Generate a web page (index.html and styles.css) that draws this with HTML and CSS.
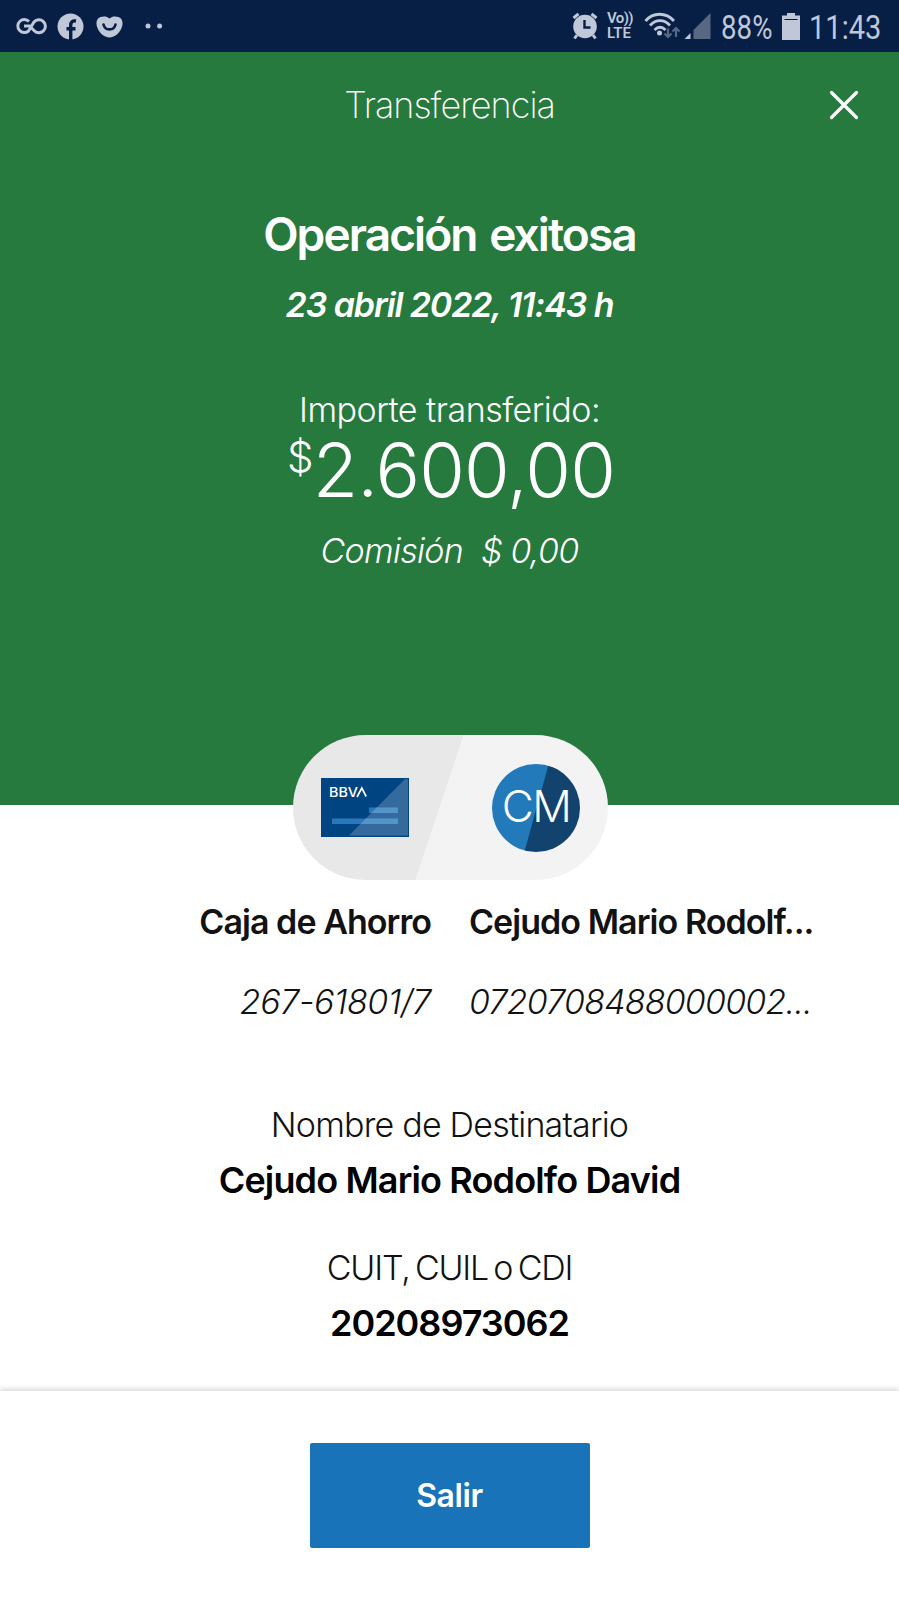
FILE: index.html
```html
<!DOCTYPE html>
<html lang="es">
<head>
    <meta charset="UTF-8">
    <meta name="viewport" content="width=device-width, initial-scale=1.0">
    <title>Transferencia</title>
    <link rel="stylesheet" href="styles.css">
</head>
<body>
    <div class="status-bar">
        <div class="status-left">
            <svg class="icon-go" width="31" height="18" viewBox="0 0 31 18">
                <path d="M13 4.500A6.500 6.500 0 1 0 12.500 14L18 5A6.500 6.500 0 1 1 18 13.500L13.500 9H8" fill="none" stroke="currentColor" stroke-width="3"/>
            </svg>
            <svg class="icon-facebook" width="27" height="27" viewBox="0 0 27 27">
                <circle cx="13.5" cy="13.5" r="13" fill="currentColor"/>
                <path d="M13.7 27V12.5c0-3.600 1.600-5 5.300-4.500M9.500 15.800h9" fill="none" stroke="#071f45" stroke-width="3.400"/>
            </svg>
            <svg class="icon-heart" width="27" height="22" viewBox="0 0 27 22">
                <path d="M13.500 2.500C16 0 20 0 23 1.200C27 3 27.300 8 25.500 12C23 18 18 21.500 13.500 21.500S4 18 1.500 12C-.3 8 0 3 4 1.200C7 0 11 0 13.500 2.500Z" fill="currentColor"/>
                <path d="M7.500 8.500C9 15 18 15 19.500 8.500" fill="none" stroke="#071f45" stroke-width="2.600" stroke-linecap="round"/>
            </svg>
            <svg class="icon-dots" width="18" height="6" viewBox="0 0 18 6">
                <circle cx="3" cy="3" r="2.500" fill="currentColor"/>
                <circle cx="14.600" cy="3" r="2.500" fill="currentColor"/>
            </svg>
        </div>
        <div class="status-right">
            <svg class="icon-alarm" width="26" height="28" viewBox="0 0 26 28">
                <circle cx="13" cy="14.500" r="11.800" fill="currentColor"/>
                <path d="M1.500 6L6.500 1.800M24.500 6L19.500 1.800M5 23L2.500 26.500M21 23L23.500 26.500" stroke="currentColor" stroke-width="3"/>
                <path d="M12.500 8V15.500H18.500" fill="none" stroke="#071f45" stroke-width="2.400"/>
            </svg>
            <div class="volte">
                <span>Vo))</span>
                <span class="lte">LTE</span>
            </div>
            <svg class="icon-wifi" width="36" height="28" viewBox="0 0 36 28">
                <path d="M1.500 9C9 0 22 0 30 9M6 13.500C12 7 20 7 26 13.500M10.500 18C14 14.500 18 14.500 21.500 18" fill="none" stroke="currentColor" stroke-width="2.800"/>
                <circle cx="15.500" cy="21" r="2.500" fill="currentColor"/>
                <path d="M24 16.500V24M20.500 21.500L24 25L27.500 21.500M32 25V17M28.500 19.500L32 16L35.500 19.500" fill="none" stroke="#586883" stroke-width="2.200"/>
            </svg>
            <svg class="icon-signal" width="27" height="28" viewBox="0 0 27 28">
                <path d="M26.500 1V27H9.500V18Z" fill="#586883"/>
                <path d="M6.500 21V27H.5Z" fill="currentColor"/>
            </svg>
            <span class="battery-text">88%</span>
            <svg class="icon-battery" width="18" height="27" viewBox="0 0 18 27">
                <path d="M5 0H13V2.500H18V27H0V2.500H5Z" fill="currentColor"/>
                <path d="M2.500 6.500H15.500" stroke="#071f45" stroke-width="1"/>
            </svg>
            <span class="clock">11:43</span>
        </div>
    </div>

    <header class="hero">
        <div class="title-bar">
            <span class="title">Transferencia</span>
            <button class="close" aria-label="Cerrar">
                <svg width="30" height="30" viewBox="0 0 30 30">
                    <path d="M2.500 2.500L27.500 27.500M27.500 2.500L2.500 27.500" stroke="#fff" stroke-width="3.200" stroke-linecap="round"/>
                </svg>
            </button>
        </div>
        <h1>Operación exitosa</h1>
        <p class="date">23 abril 2022, 11:43 h</p>
        <p class="amount-label">Importe transferido:</p>
        <p class="amount"><span class="currency">$</span><span>2.600,00</span></p>
        <p class="fee">Comisión&nbsp; $ 0,00</p>
    </header>

    <main>
        <div class="pill">
            <!-- Origin card -->
            <svg class="card" width="88" height="59" viewBox="0 0 88 59">
                <rect width="88" height="59" fill="#004481"/>
                <path d="M84 1H87V57.500H28Z" fill="#356a9c"/>
                <path d="M48 29.500H77V35H48ZM11 40.500H77V46H11Z" fill="#2a77b9"/>
                <path d="M55.500 29.500H77V35H50ZM44.800 40.500H77V46H39.500Z" fill="#5395ca"/>
                <text class="card-brand" x="8" y="19" textLength="29" lengthAdjust="spacingAndGlyphs">BBV</text>
                <path d="M36 19L40.800 10L45.200 18.500" fill="none" stroke="#fff" stroke-width="1.700"/>
            </svg>
            <div class="avatar">CM</div>
        </div>

        <div class="accounts">
            <div class="account from">
                <p class="account-name">Caja de Ahorro</p>
                <p class="account-number">267-61801/7</p>
            </div>
            <div class="account to">
                <p class="account-name">Cejudo Mario Rodolf...</p>
                <p class="account-number">0720708488000002...</p>
            </div>
        </div>

        <dl class="details">
            <dt class="name-label">Nombre de Destinatario</dt>
            <dd class="name-value">Cejudo Mario Rodolfo David</dd>
            <dt class="id-label">CUIT, CUIL o CDI</dt>
            <dd class="id-value">20208973062</dd>
        </dl>
    </main>

    <footer>
        <button class="exit">Salir</button>
    </footer>
</body>
</html>
```
FILE: styles.css
```css
* {
    box-sizing: border-box;
}
body {
    margin: 0;
    height: 1599px;
    display: flex;
    flex-direction: column;
    overflow: hidden;
    font-family: Inter, "Open Sans", sans-serif;
    font-size: 34px;
    line-height: 44px;
    font-weight: 300;
    color: #121212;
    background-color: #fff;
}
h1, p, dl, dd {
    margin: 0;
}
button {
    padding: 0;
    border: none;
    font-family: inherit;
    cursor: pointer;
}
svg {
    display: block;
    flex: none;
}

/* Status bar */
.status-bar {
    height: 52px;
    flex: none;
    display: flex;
    justify-content: space-between;
    padding: 0 20px 0 16px;
    background-color: #071f45;
    color: #bfc7d8;
}
.status-left, .status-right {
    display: flex;
    align-items: center;
}
.icon-facebook {
    margin-left: 10px;
}
.icon-heart {
    margin: 2px 0 0 12px;
}
.icon-dots {
    margin-left: 22px;
}
.volte {
    display: flex;
    flex-direction: column;
    margin-left: 9px;
    width: 26px;
    font: 600 15px/15px Roboto, sans-serif;
    letter-spacing: -0.6px;
    white-space: nowrap;
}
.lte {
    letter-spacing: -0.1px;
}
.icon-wifi {
    margin-left: 11px;
}
.icon-signal {
    margin-left: 4px;
}
.battery-text, .clock {
    font-family: Roboto, sans-serif;
    font-size: 33px;
    font-weight: 400;
    margin-top: 3px;
    transform: scaleX(0.84);
    transform-origin: left;
}
.battery-text {
    width: 52px;
    margin-left: 10px;
}
.icon-battery {
    margin-left: 9px;
}
.clock {
    width: 70px;
    margin-left: 9px;
    transform: scaleX(0.88);
}

/* Green area */
.hero {
    height: 753px;
    flex: none;
    background-color: #277a3e;
    color: #fff;
    text-align: center;
    white-space: nowrap;
}
.title-bar {
    height: 106px;
    display: grid;
    grid-template-columns: 1fr auto 1fr;
    align-items: center;
    padding: 0 40px;
}
.title {
    grid-column: 2;
    font-size: 36px;
    font-weight: 200;
    letter-spacing: -1px;
}
.close {
    justify-self: end;
    background: none;
}
h1 {
    margin-top: 46px;
    font-size: 46px;
    line-height: 60px;
    font-weight: 600;
    letter-spacing: -1.9px;
    word-spacing: 3px;
}
.date {
    margin-top: 19px;
    font-weight: 600;
    font-style: italic;
    letter-spacing: -1.1px;
}
.amount-label {
    margin-top: 61px;
    letter-spacing: -0.5px;
}
.amount {
    display: flex;
    justify-content: center;
    font-size: 74px;
    line-height: 76px;
    letter-spacing: -0.8px;
    padding-left: 3px;
}
.currency {
    font-size: 42px;
    line-height: 50px;
}
.fee {
    margin-top: 21px;
    font-style: italic;
    letter-spacing: -0.7px;
}

/* Origin and destination */
main {
    height: 586px;
    flex: none;
}
.pill {
    position: relative;
    display: flex;
    align-items: center;
    justify-content: space-between;
    width: 315px;
    height: 145px;
    margin: -70px auto 0;
    padding: 0 28px;
    border-radius: 73px;
    background: linear-gradient(108.4deg, #e8e8e8 0 calc(50% - 11px), #f3f3f3 calc(50% - 10px));
    left: 1px;
}
.card-brand {
    font-family: Inter, sans-serif;
    font-size: 13px;
    font-weight: 500;
    fill: #fff;
}
.avatar {
    width: 88px;
    height: 88px;
    border-radius: 50%;
    background: linear-gradient(105.5deg, #237aba 50%, #12436f calc(50% + 1px));
    color: #fff;
    font-size: 44px;
    line-height: 85px;
    letter-spacing: -1.5px;
    text-align: center;
}
.accounts {
    display: grid;
    grid-template-columns: 431px 1fr;
    column-gap: 38px;
    margin-top: 20px;
    white-space: nowrap;
}
.from {
    text-align: right;
}
.account-name {
    font-weight: 600;
    letter-spacing: -0.95px;
}
.account-number {
    margin-top: 36px;
    font-style: italic;
    letter-spacing: -0.8px;
}
.from .account-number {
    letter-spacing: -0.4px;
}

/* Recipient */
.details {
    margin-top: 79px;
    text-align: center;
    white-space: nowrap;
}
.name-label {
    letter-spacing: -0.8px;
}
.name-value, .id-value {
    font-size: 36px;
    font-weight: 600;
    color: #000;
    letter-spacing: -0.85px;
}
.name-value {
    margin-top: 11px;
}
.id-label {
    margin-top: 44px;
    letter-spacing: -1.2px;
    word-spacing: -3px;
}
.id-value {
    margin-top: 11px;
    letter-spacing: -1px;
}

footer {
    flex: 1;
    display: flex;
    justify-content: center;
    align-items: flex-start;
    padding-top: 52px;
    background-color: #fff;
    box-shadow: 0 -2px 5px rgba(0, 0, 0, 0.16);
}
.exit {
    width: 280px;
    height: 105px;
    border-radius: 2px;
    background-color: #1973b8;
    color: #fff;
    font-size: 32px;
    font-weight: 600;
    letter-spacing: -0.4px;
}
```
